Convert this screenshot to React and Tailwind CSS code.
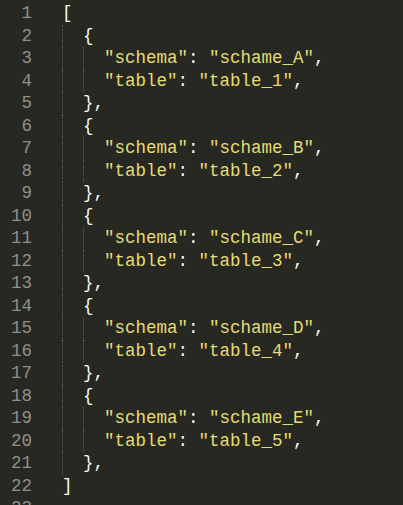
const entries = ['A', 'B', 'C', 'D', 'E']

function buildLines() {
  const lines = [{ indent: 0, parts: [['p', '[']] }]
  entries.forEach((letter, i) => {
    lines.push({ indent: 1, parts: [['p', '{']] })
    lines.push({
      indent: 2,
      parts: [['s', '"schema"'], ['p', ': '], ['s', `"schame_${letter}"`], ['p', ',']],
    })
    lines.push({
      indent: 2,
      parts: [['s', '"table"'], ['p', ': '], ['s', `"table_${i + 1}"`], ['p', ',']],
    })
    lines.push({ indent: 1, parts: [['p', '},']] })
  })
  lines.push({ indent: 0, parts: [['p', ']']] })
  lines.push({ indent: 0, parts: [] })
  return lines
}

function App() {
  const lines = buildLines()
  return (
    <div
      className="w-[403px] h-[505px] overflow-hidden bg-[#272822] pt-[2px] text-[17.5px] leading-[22.5px]"
      style={{ fontFamily: '"Liberation Mono", "DejaVu Sans Mono", monospace' }}
    >
      {lines.map((line, n) => (
        <div key={n} className="flex h-[22.5px] whitespace-pre">
          <span className="w-[32px] shrink-0 text-right text-[#90908a]">{n + 1}</span>
          <div className="ml-[30px] flex">
            {Array.from({ length: line.indent }).map((_, k) => (
              <span key={k} className="w-[21px] h-full border-l border-dotted border-[#5e5f58]" />
            ))}
            <span>
              {line.parts.map(([kind, text], k) => (
                <span key={k} className={kind === 's' ? 'text-[#e6db74]' : 'text-[#f8f8f2]'}>
                  {text}
                </span>
              ))}
            </span>
          </div>
        </div>
      ))}
    </div>
  )
}

export default App
